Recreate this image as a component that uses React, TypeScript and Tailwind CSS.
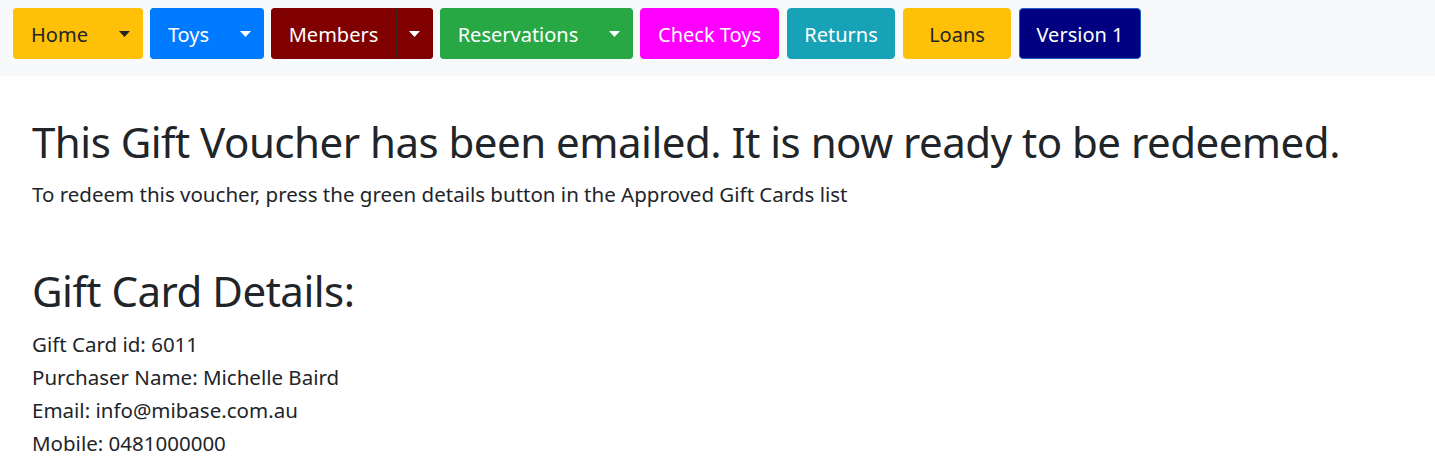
import React from "react";

type NavItem = {
  label: string;
  bg: string;
  text: string;
  border: string;
  width: string;
  split?: boolean;
  divider?: string;
  extra?: string;
};

const navItems: NavItem[] = [
  { label: "Home", bg: "bg-[#ffc107]", text: "text-[#212529]", border: "border-[#ffc107]", width: "w-[93px]", split: true },
  { label: "Toys", bg: "bg-[#007bff]", text: "text-white", border: "border-[#007bff]", width: "w-[77px]", split: true },
  { label: "Members", bg: "bg-[#800000]", text: "text-white", border: "border-[#800000]", width: "w-[125px]", split: true, divider: "border-l-[#3a2a2a]" },
  { label: "Reservations", bg: "bg-[#28a745]", text: "text-white", border: "border-[#28a745]", width: "w-[156px]", split: true },
  { label: "Check Toys", bg: "bg-[#ff00ff]", text: "text-white", border: "border-[#ff00ff]", width: "w-[139px]" },
  { label: "Returns", bg: "bg-[#17a2b8]", text: "text-white", border: "border-[#17a2b8]", width: "w-[108px]", extra: "ml-px" },
  { label: "Loans", bg: "bg-[#ffc107]", text: "text-[#212529]", border: "border-[#ffc107]", width: "w-[108px]", extra: "ml-px" },
  { label: "Version 1", bg: "bg-[#000080]", text: "text-white", border: "border-[#1a5bc4]", width: "w-[122px]", extra: "ml-px" },
];

function Caret({ dark }: { dark: boolean }) {
  return (
    <svg width="11" height="6" viewBox="0 0 11 6" className="block">
      <path d="M0 0 L11 0 L5.5 6 Z" fill={dark ? "#212529" : "#ffffff"} />
    </svg>
  );
}

function NavButton({ item }: { item: NavItem }) {
  const dark = item.text === "text-[#212529]";
  if (!item.split) {
    return (
      <button
        className={`${item.width} ${item.extra ?? ""} h-[51px] rounded-[4px] border ${item.bg} ${item.border} ${item.text} text-[20px] leading-[30px] flex items-center justify-center pt-[2px]`}
      >
        {item.label}
      </button>
    );
  }
  return (
    <div className={`flex h-[51px] rounded-[4px] ${item.bg} ${item.text}`}>
      <button className={`${item.width} h-full rounded-l-[4px] border ${item.border} text-[20px] leading-[30px] flex items-center justify-center pt-[2px]`}>
        {item.label}
      </button>
      <button
        className={`w-[37px] h-full rounded-r-[4px] border ${item.border} ${item.divider ?? ""} flex items-center justify-center pt-px`}
      >
        <Caret dark={dark} />
      </button>
    </div>
  );
}

export default function App() {
  return (
    <div className="min-h-[473px] bg-white text-[#212529] font-['Segoe_UI','Noto_Sans',sans-serif]">
      <nav className="h-[76px] bg-[#f8f9fa] flex items-start gap-[7px] pl-[13px] pt-[8px]">
        {navItems.map((item) => (
          <NavButton key={item.label} item={item} />
        ))}
      </nav>

      <main className="pl-[32px] pt-[41px]">
        <h1 className="text-[42px] leading-[50px] font-normal tracking-[-0.5px] whitespace-nowrap">
          This Gift Voucher has been emailed. It is now ready to be redeemed.
        </h1>
        <p className="text-[20.5px] leading-[30px] mt-[12px]">
          To redeem this voucher, press the green details button in the Approved Gift Cards list
        </p>

        <h2 className="text-[42px] leading-[50px] font-normal tracking-[-0.5px] mt-[57px]">Gift Card Details:</h2>
        <div className="text-[20.5px] leading-[33px] mt-[12px]">
          <div>Gift Card id: 6011</div>
          <div>Purchaser Name: Michelle Baird</div>
          <div>Email: info@mibase.com.au</div>
          <div>Mobile: 0481000000</div>
        </div>
      </main>
    </div>
  );
}
